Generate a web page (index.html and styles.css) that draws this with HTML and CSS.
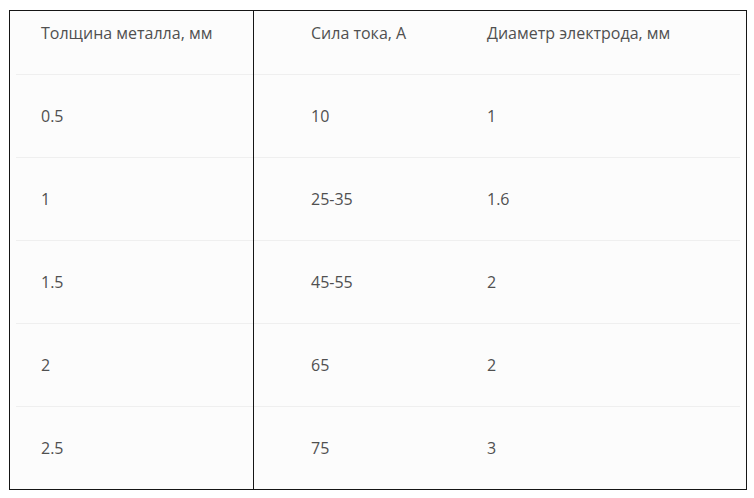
FILE: index.html
```
<!DOCTYPE html>
<html lang="ru">
<head>
<meta charset="utf-8">
<link rel="stylesheet" href="styles.css">
</head>
<body>
<div class="frame">
  <div class="row head">
    <div class="cell c1">Толщина металла, мм</div>
    <div class="cell c2">Сила тока, А</div>
    <div class="cell c3">Диаметр электрода, мм</div>
  </div>
  <div class="row">
    <div class="cell c1">0.5</div>
    <div class="cell c2">10</div>
    <div class="cell c3">1</div>
  </div>
  <div class="row">
    <div class="cell c1">1</div>
    <div class="cell c2">25-35</div>
    <div class="cell c3">1.6</div>
  </div>
  <div class="row">
    <div class="cell c1">1.5</div>
    <div class="cell c2">45-55</div>
    <div class="cell c3">2</div>
  </div>
  <div class="row">
    <div class="cell c1">2</div>
    <div class="cell c2">65</div>
    <div class="cell c3">2</div>
  </div>
  <div class="row last">
    <div class="cell c1">2.5</div>
    <div class="cell c2">75</div>
    <div class="cell c3">3</div>
  </div>
</div>
</body>
</html>
```
FILE: styles.css
```
html, body {
  margin: 0;
  padding: 0;
  background: #ffffff;
}
body {
  padding: 10px 0 0 9px;
  font-family: "Open Sans", "Noto Sans", sans-serif;
  font-size: 16px;
  color: #505050;
}
.frame {
  position: relative;
  width: 738px;
  border: 1px solid #151515;
  background: #fcfcfc;
  padding: 0 6px;
  box-sizing: border-box;
}
.frame::before {
  content: "";
  position: absolute;
  left: 243px;
  top: 0;
  bottom: -2px;
  width: 1px;
  background: #151515;
}
.row {
  display: grid;
  grid-template-columns: 270px 176px 1fr;
  height: 82px;
  align-items: center;
  border-bottom: 1px solid #efefef;
}
.row.head {
  height: 63px;
  align-items: start;
}
.row.head .cell {
  padding-top: 11px;
}
.row.last {
  border-bottom: none;
}
.cell {
  padding-left: 25px;
  line-height: 22px;
}
```
